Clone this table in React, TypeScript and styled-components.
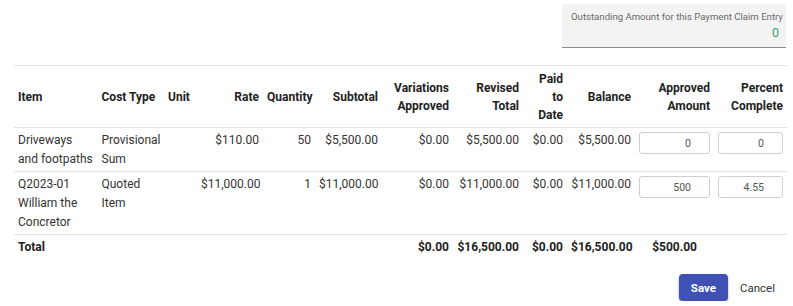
import React from 'react';
import styled, { createGlobalStyle } from 'styled-components';

const GlobalStyle = createGlobalStyle`
  body {
    margin: 0;
    background: #fff;
    font-family: Roboto, "Liberation Sans", Arial, sans-serif;
  }
`;

const Page = styled.div`
  padding: 4px 7px 0 14px;
  color: #333;
`;

const Summary = styled.div`
  display: flex;
  justify-content: flex-end;
  margin-bottom: 17px;
`;

const OutstandingBox = styled.div`
  width: 224px;
  height: 44px;
  box-sizing: border-box;
  background: #f3f3f3;
  border-radius: 4px 4px 0 0;
  border-bottom: 1px solid #8a8a8a;
  padding: 6px 7px 0 9px;
  display: flex;
  flex-direction: column;
`;

const OutstandingLabel = styled.span`
  font-size: 9.6px;
  line-height: 13px;
  white-space: nowrap;
  color: #6a6a6a;
`;

const OutstandingValue = styled.span`
  align-self: flex-end;
  font-size: 12.5px;
  line-height: 16px;
  margin-top: 2px;
  color: #2e9e72;
`;

const Table = styled.table`
  width: 772px;
  table-layout: fixed;
  border-collapse: collapse;
  font-size: 12px;
`;

type AlignProps = { $align?: 'left' | 'right' };

const HeadCell = styled.th<AlignProps>`
  padding: 4px 4px 3px;
  line-height: 18px;
  font-weight: 700;
  color: #222;
  text-align: ${p => p.$align || 'left'};
  vertical-align: middle;
  border-top: 1px solid #e2e2e2;
  border-bottom: 1px solid #e2e2e2;
`;

const Row = styled.tr`
  border-bottom: 1px solid #e2e2e2;
`;

const Cell = styled.td<AlignProps>`
  padding: 3px 4px 2px;
  line-height: 19px;
  text-align: ${p => p.$align || 'left'};
  vertical-align: top;
`;

const TotalCell = styled.td<AlignProps & { $inset?: number }>`
  padding: 3px ${p => 4 + (p.$inset || 0)}px 3px 4px;
  line-height: 19px;
  font-weight: 700;
  color: #222;
  text-align: ${p => p.$align || 'left'};
`;

const AmountInput = styled.input`
  display: block;
  width: 100%;
  height: 22px;
  margin-top: 1px;
  box-sizing: border-box;
  border: 1px solid #cfcfcf;
  border-radius: 3px;
  padding: 0 18px 0 4px;
  font-family: inherit;
  font-size: 10.5px;
  color: #555;
  text-align: right;
  background: #fff;
  outline: none;
`;

const Actions = styled.div`
  display: flex;
  justify-content: flex-end;
  margin-top: 14px;
`;

const PrimaryButton = styled.button`
  height: 27px;
  padding: 0 12px;
  border: none;
  border-radius: 4px;
  background: #3f51b5;
  color: #fff;
  font-family: inherit;
  font-size: 11.5px;
  font-weight: 700;
  box-shadow: 0 2px 2px rgba(0, 0, 0, 0.2), 0 1px 4px rgba(0, 0, 0, 0.12);
  cursor: pointer;
`;

const TextButton = styled.button`
  height: 27px;
  padding: 0 11px 0 12px;
  border: none;
  background: transparent;
  color: #333;
  font-family: inherit;
  font-size: 11.5px;
  cursor: pointer;
`;

const columns: { label: React.ReactNode; width: number; align?: 'left' | 'right' }[] = [
  { label: 'Item', width: 83.5 },
  { label: 'Cost Type', width: 66.5 },
  { label: 'Unit', width: 33 },
  { label: 'Rate', width: 66, align: 'right' },
  { label: 'Quantity', width: 52, align: 'right' },
  { label: 'Subtotal', width: 67, align: 'right' },
  { label: <>Variations<br />Approved</>, width: 71, align: 'right' },
  { label: <>Revised<br />Total</>, width: 70, align: 'right' },
  { label: <>Paid<br />to<br />Date</>, width: 44, align: 'right' },
  { label: 'Balance', width: 68, align: 'right' },
  { label: <>Approved<br />Amount</>, width: 79, align: 'right' },
  { label: <>Percent<br />Complete</>, width: 73, align: 'right' },
];

const rows = [
  {
    item: 'Driveways and footpaths',
    costType: 'Provisional Sum',
    unit: '',
    rate: '$110.00',
    quantity: '50',
    subtotal: '$5,500.00',
    variations: '$0.00',
    revised: '$5,500.00',
    paid: '$0.00',
    balance: '$5,500.00',
    approved: '0',
    percent: '0',
  },
  {
    item: 'Q2023-01 William the Concretor',
    costType: 'Quoted Item',
    unit: '',
    rate: '$11,000.00',
    quantity: '1',
    subtotal: '$11,000.00',
    variations: '$0.00',
    revised: '$11,000.00',
    paid: '$0.00',
    balance: '$11,000.00',
    approved: '500',
    percent: '4.55',
  },
];

export default function App() {
  return (
    <Page>
      <GlobalStyle />
      <Summary>
        <OutstandingBox>
          <OutstandingLabel>Outstanding Amount for this Payment Claim Entry</OutstandingLabel>
          <OutstandingValue>0</OutstandingValue>
        </OutstandingBox>
      </Summary>

      <Table>
        <colgroup>
          {columns.map((c, i) => (
            <col key={i} style={{ width: c.width }} />
          ))}
        </colgroup>
        <thead>
          <tr>
            {columns.map((c, i) => (
              <HeadCell key={i} $align={c.align}>
                {c.label}
              </HeadCell>
            ))}
          </tr>
        </thead>
        <tbody>
          {rows.map(r => (
            <Row key={r.item}>
              <Cell>{r.item}</Cell>
              <Cell>{r.costType}</Cell>
              <Cell>{r.unit}</Cell>
              <Cell $align="right">{r.rate}</Cell>
              <Cell $align="right">{r.quantity}</Cell>
              <Cell $align="right">{r.subtotal}</Cell>
              <Cell $align="right">{r.variations}</Cell>
              <Cell $align="right">{r.revised}</Cell>
              <Cell $align="right">{r.paid}</Cell>
              <Cell $align="right">{r.balance}</Cell>
              <Cell>
                <AmountInput defaultValue={r.approved} />
              </Cell>
              <Cell>
                <AmountInput defaultValue={r.percent} />
              </Cell>
            </Row>
          ))}
          <tr>
            <TotalCell>Total</TotalCell>
            <TotalCell />
            <TotalCell />
            <TotalCell />
            <TotalCell />
            <TotalCell />
            <TotalCell $align="right">$0.00</TotalCell>
            <TotalCell $align="right">$16,500.00</TotalCell>
            <TotalCell $align="right">$0.00</TotalCell>
            <TotalCell $align="right">$16,500.00</TotalCell>
            <TotalCell $align="right" $inset={13}>$500.00</TotalCell>
            <TotalCell />
          </tr>
        </tbody>
      </Table>

      <Actions>
        <PrimaryButton>Save</PrimaryButton>
        <TextButton>Cancel</TextButton>
      </Actions>
    </Page>
  );
}
